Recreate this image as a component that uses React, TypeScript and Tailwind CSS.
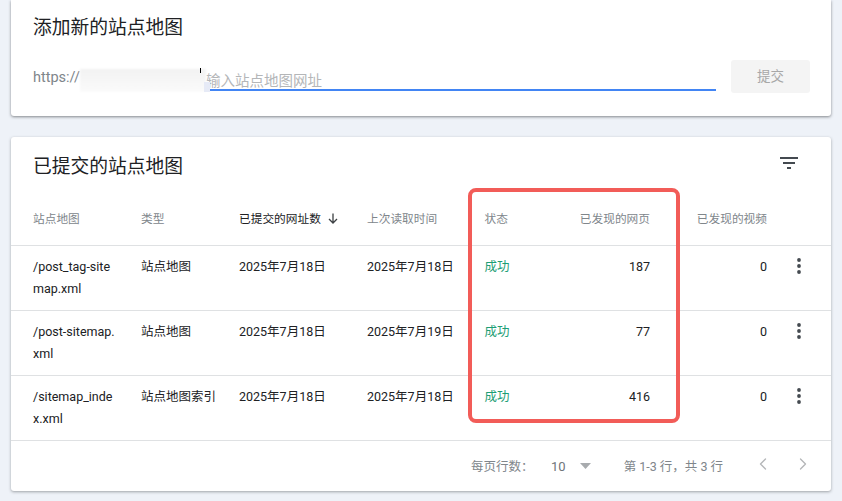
import { ChevronLeft, ChevronRight } from "lucide-react";

const rows = [
  { name: ["/post_tag-site", "map.xml"], type: "站点地图", submitted: "2025年7月18日", read: "2025年7月18日", pages: "187" },
  { name: ["/post-sitemap.", "xml"], type: "站点地图", submitted: "2025年7月18日", read: "2025年7月19日", pages: "77" },
  { name: ["/sitemap_inde", "x.xml"], type: "站点地图索引", submitted: "2025年7月18日", read: "2025年7月18日", pages: "416" },
];

const gridCols = "grid grid-cols-[108px_98px_128px_117.5px_95.5px_70px_117px_1fr]";

function MoreIcon() {
  return (
    <svg width="4" height="16" viewBox="0 0 4 16" className="fill-[#444a50]">
      <circle cx="2" cy="2" r="1.9" />
      <circle cx="2" cy="8" r="1.9" />
      <circle cx="2" cy="14" r="1.9" />
    </svg>
  );
}

export default function App() {
  return (
    <div
      className="relative h-[501px] w-[842px] overflow-hidden bg-[#eef2f8] px-[11px] text-[#202124]"
      style={{ fontFamily: "Roboto, 'Noto Sans CJK SC', sans-serif" }}
    >
      {/* Add new sitemap */}
      <div className="h-[116px] rounded-b-[3px] bg-white pl-[22px] pr-[21px] pt-[15px] shadow-[0_1px_3px_rgba(60,64,67,0.6)]">
        <h2 className="text-[18.75px] leading-[26px]">添加新的站点地图</h2>
        <div className="mt-[19px] flex items-start">
          <div className="relative flex h-[31px] flex-1 items-start">
            <span className="mt-[7px] text-[14.5px] leading-[22px] text-[#80868b]">https://</span>
            {/* redacted domain */}
            <div className="relative z-10 mr-[4px] mt-[9px] h-[23px] w-[126px] bg-gradient-to-b from-[#f2f2f2] to-[#fbfbfb] blur-[1px]" />
            <div className="absolute left-[167px] top-[8px] z-20 h-[5px] w-px bg-black" />
            <div className="absolute left-[171px] top-[22px] z-20 h-[10px] w-[6px] bg-[#e6eaf6]" />
            <div className="mt-[6px] flex h-[25px] flex-1 items-end border-b-2 border-[#4285f4] text-[14.5px] leading-[14px] text-[#b4b6b8]">
              <span className="ml-[-4px]">输入站点地图网址</span>
            </div>
          </div>
          <button className="ml-[15px] h-[33px] w-[79px] rounded-[3px] bg-[#f4f4f4] text-[13.5px] text-[#a8a8a8]">
            提交
          </button>
        </div>
      </div>

      {/* Submitted sitemaps */}
      <div className="mt-[21px] h-[354px] rounded-[3px] bg-white shadow-[0_1px_3px_rgba(60,64,67,0.45)]">
        <div className="flex h-[52px] items-start justify-between pl-[22px] pr-[33px] pt-[17px]">
          <h2 className="text-[18.75px] leading-[26px]">已提交的站点地图</h2>
          <svg width="18" height="12" viewBox="0 0 18 12" className="mt-[3px] fill-[#444a50]">
            <rect x="0" y="0" width="18" height="2" />
            <rect x="3" y="5" width="12" height="2" />
            <rect x="7" y="10" width="4" height="2" />
          </svg>
        </div>

        <div className={`${gridCols} h-[57px] items-center border-b border-[#dfe1e3] pl-[22px] pt-[6px] text-[11.7px] text-[#80868b]`}>
          <div>站点地图</div>
          <div>类型</div>
          <div className="flex items-center gap-[7px] text-[#202124]">
            已提交的网址数
            <svg width="10" height="11" viewBox="0 0 10 11" fill="none" stroke="#3c4043" strokeWidth="1.3" className="mt-[-2px]">
              <path d="M5 0.5V10M1 6l4 4 4-4" />
            </svg>
          </div>
          <div>上次读取时间</div>
          <div>状态</div>
          <div className="justify-self-end whitespace-nowrap">已发现的网页</div>
          <div className="justify-self-end whitespace-nowrap">已发现的视频</div>
          <div />
        </div>

        {rows.map((row) => (
          <div
            key={row.name[0]}
            className={`${gridCols} h-[65px] items-start border-b border-[#dfe1e3] pl-[22px] pt-[10px] text-[12.5px] leading-[22px]`}
          >
            <div>
              <div>{row.name[0]}</div>
              <div>{row.name[1]}</div>
            </div>
            <div>{row.type}</div>
            <div>{row.submitted}</div>
            <div>{row.read}</div>
            <div className="text-[#1e9e75]">成功</div>
            <div className="justify-self-end">{row.pages}</div>
            <div className="justify-self-end">0</div>
            <div className="ml-[30px] pt-[2px]">
              <MoreIcon />
            </div>
          </div>
        ))}

        <div className="flex h-[50px] items-center pl-[460px] pt-[3px] text-[12.5px] text-[#80868b]">
          <span className="w-[80px]">每页行数：</span>
          <span className="mt-[-2px] text-[13px] text-[#70757a]">10</span>
          <svg width="11" height="6" viewBox="0 0 11 6" className="ml-[14px] mt-[-4px] fill-[#a8abae]">
            <path d="M0 0h11L5.5 6z" />
          </svg>
          <span className="ml-[33px] w-[100px] whitespace-nowrap">第 1-3 行，共 3 行</span>
          <ChevronLeft size={20} strokeWidth={1.6} className="ml-[29px] mt-[-7px] text-[#b4b6b8]" />
          <ChevronRight size={20} strokeWidth={1.6} className="ml-[20px] mt-[-7px] text-[#b4b6b8]" />
        </div>
      </div>

      {/* Highlight */}
      <div className="absolute left-[468px] top-[188px] h-[235px] w-[212px] rounded-[8px] border-[4px] border-[#f25c58]" />
    </div>
  );
}
